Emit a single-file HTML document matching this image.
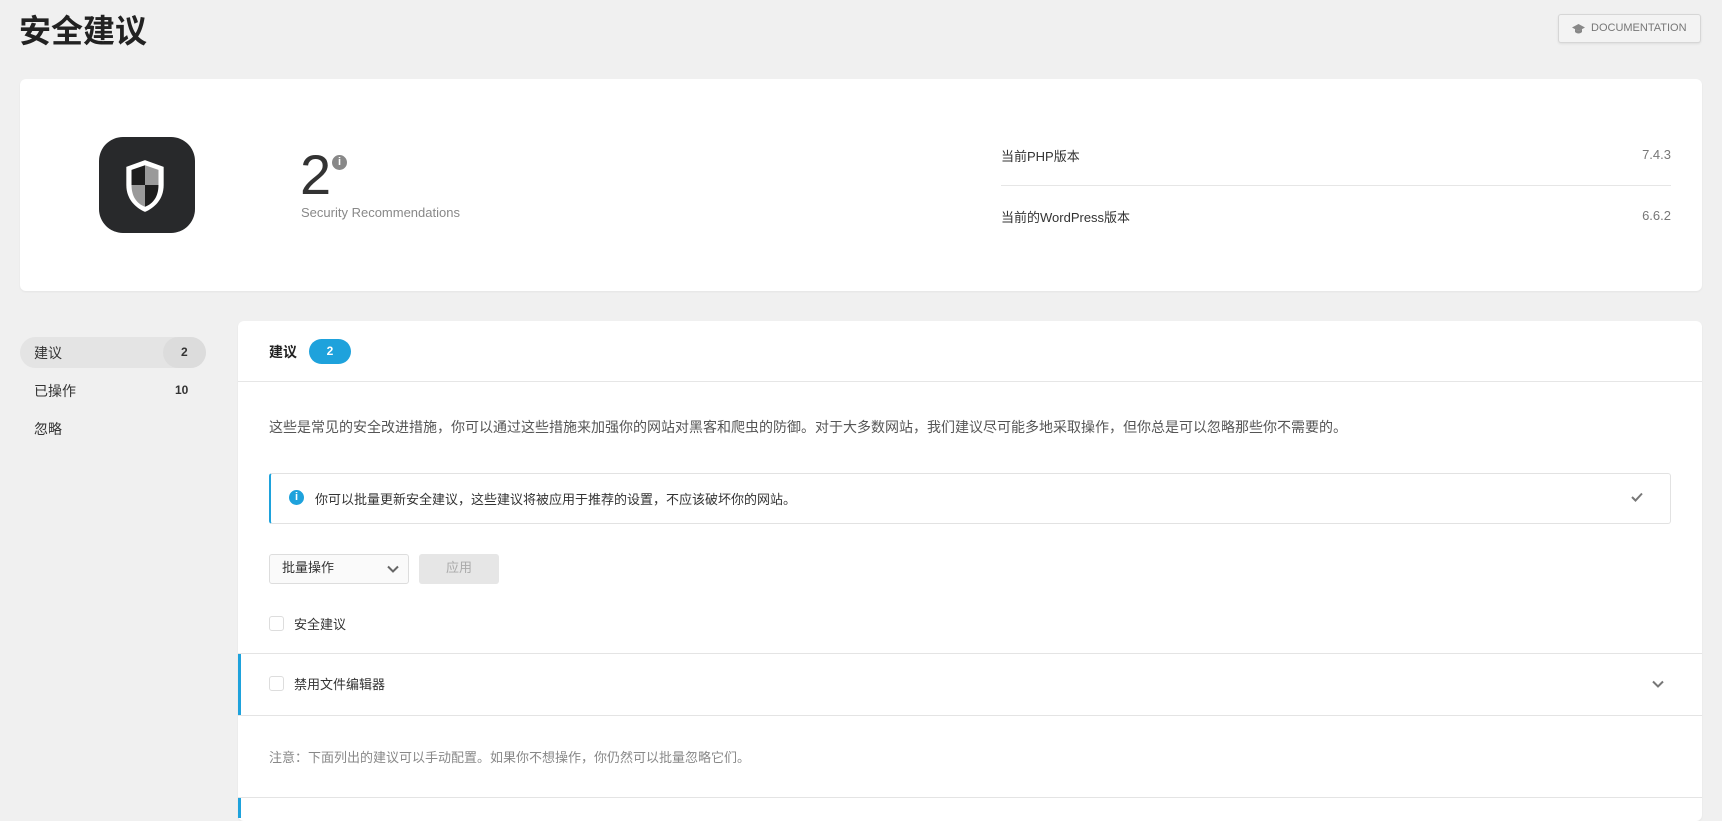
<!DOCTYPE html>
<html><head><meta charset="utf-8"><style>
*{box-sizing:border-box;margin:0;padding:0}
body{width:1722px;height:809px;overflow:hidden;background:#f0f0f0;font-family:"Liberation Sans","Noto Sans CJK SC",sans-serif;color:#333;position:relative}
.a{position:absolute}
.card{background:#fff;border-radius:6px;box-shadow:0 1px 2px rgba(0,0,0,.05)}
</style></head><body>
<div class="a" style="left:19px;top:11px;font-size:32px;font-weight:bold;color:#222;line-height:40px">安全建议</div>
<div class="a" style="left:1558px;top:14px;width:143px;height:29px;border:1px solid #d6d6d6;border-radius:3px;background:#f3f3f3;box-shadow:0 1px 2px rgba(0,0,0,.08);font-size:11px;color:#777;line-height:27px;padding-left:32px">DOCUMENTATION
<svg class="a" style="left:13px;top:9px" width="13" height="10" viewBox="0 0 13 10"><path d="M0 3.5L6.5 0 13 3.5 6.5 7z" fill="#888"/><path d="M3 5v3c2 2 5 2 7 0V5L6.5 7z" fill="#888"/></svg></div>

<div class="a card" style="left:20px;top:79px;width:1682px;height:212px"></div>
<div class="a" style="left:99px;top:137px;width:96px;height:96px;border-radius:24px;background:#28292b"></div>
<svg class="a" style="left:122px;top:158px" width="46" height="56" viewBox="0 0 42 54">
<path d="M21 2L3 8.5v17.5c0 14 9 22 18 26 9-4 18-12 18-26V8.5z" fill="#fff"/>
<path d="M21 7L8 11.5V26h13z" fill="#1e1e1e"/><path d="M21 7l13 4.5V26H21z" fill="#9a9a9a"/>
<path d="M8 26h13v21C13 44 8 37 8 26z" fill="#9a9a9a"/><path d="M21 26h13c0 11-5 18-13 21z" fill="#1e1e1e"/>
</svg>
<div class="a" style="left:300px;top:147px;font-size:56px;color:#333;line-height:56px;font-weight:300">2</div>
<div class="a" style="left:332px;top:155px;width:15px;height:15px;border-radius:50%;background:#888;color:#fff;font-size:11px;font-weight:bold;text-align:center;line-height:15px">i</div>
<div class="a" style="left:301px;top:205px;font-size:13px;color:#888">Security Recommendations</div>
<div class="a" style="left:1001px;top:146px;font-size:13px">当前PHP版本</div>
<div class="a" style="left:1620px;top:147px;width:51px;text-align:right;font-size:13px;color:#777">7.4.3</div>
<div class="a" style="left:1001px;top:185px;width:670px;height:1px;background:#e6e6e6"></div>
<div class="a" style="left:1001px;top:207px;font-size:13px">当前的WordPress版本</div>
<div class="a" style="left:1620px;top:208px;width:51px;text-align:right;font-size:13px;color:#777">6.6.2</div>

<div class="a" style="left:20px;top:337px;width:186px;height:31px;border-radius:16px;background:#e4e4e4"></div>
<div class="a" style="left:163px;top:337px;width:43px;height:31px;border-radius:16px;background:#dcdcdc"></div>
<div class="a" style="left:34px;top:343px;font-size:14px">建议</div>
<div class="a" style="left:181px;top:345px;font-size:12px;font-weight:bold">2</div>
<div class="a" style="left:34px;top:381px;font-size:14px">已操作</div>
<div class="a" style="left:175px;top:383px;font-size:12px;font-weight:bold">10</div>
<div class="a" style="left:34px;top:419px;font-size:14px">忽略</div>

<div class="a card" style="left:238px;top:321px;width:1464px;height:500px"></div>
<div class="a" style="left:269px;top:342px;font-size:14px;font-weight:bold;color:#222">建议</div>
<div class="a" style="left:309px;top:339px;width:42px;height:25px;border-radius:13px;background:#1ea2dc;color:#fff;font-size:12px;font-weight:bold;text-align:center;line-height:25px">2</div>
<div class="a" style="left:238px;top:381px;width:1464px;height:1px;background:#e6e6e6"></div>
<div class="a" style="left:269px;top:417px;font-size:14px;color:#555">这些是常见的安全改进措施，你可以通过这些措施来加强你的网站对黑客和爬虫的防御。对于大多数网站，我们建议尽可能多地采取操作，但你总是可以忽略那些你不需要的。</div>
<div class="a" style="left:269px;top:473px;width:1402px;height:51px;border:1px solid #e2e2e2;border-left:2px solid #1ea2dc;border-radius:3px"></div>
<div class="a" style="left:289px;top:490px;width:15px;height:15px;border-radius:50%;background:#1ea2dc;color:#fff;font-size:11px;font-weight:bold;text-align:center;line-height:15px">i</div>
<div class="a" style="left:315px;top:489px;font-size:13px;color:#333">你可以批量更新安全建议，这些建议将被应用于推荐的设置，不应该破坏你的网站。</div>
<svg class="a" style="left:1631px;top:492px" width="12" height="10" viewBox="0 0 12 10"><path d="M1 5l3.5 3.5L11 1.5" stroke="#777" stroke-width="2" fill="none"/></svg>
<div class="a" style="left:269px;top:554px;width:140px;height:30px;border:1px solid #ddd;border-radius:3px;background:#fafafa;font-size:13px;line-height:26px;padding-left:12px">批量操作</div>
<svg class="a" style="left:387px;top:565px" width="12" height="8" viewBox="0 0 12 8"><path d="M1 1.5l5 5 5-5" stroke="#666" stroke-width="2" fill="none"/></svg>
<div class="a" style="left:419px;top:554px;width:80px;height:30px;border-radius:3px;background:#e6e6e6;color:#aaa;font-size:13px;text-align:center;line-height:28px">应用</div>
<div class="a" style="left:269px;top:616px;width:15px;height:15px;border:1px solid #ddd;border-radius:3px"></div>
<div class="a" style="left:294px;top:614px;font-size:13px">安全建议</div>
<div class="a" style="left:238px;top:653px;width:1464px;height:1px;background:#e4e4e4"></div>
<div class="a" style="left:238px;top:654px;width:3px;height:61px;background:#1ea2dc"></div>
<div class="a" style="left:269px;top:676px;width:15px;height:15px;border:1px solid #ddd;border-radius:3px"></div>
<div class="a" style="left:294px;top:674px;font-size:13px">禁用文件编辑器</div>
<svg class="a" style="left:1652px;top:680px" width="12" height="8" viewBox="0 0 12 8"><path d="M1 1.5l5 5 5-5" stroke="#777" stroke-width="2" fill="none"/></svg>
<div class="a" style="left:238px;top:715px;width:1464px;height:1px;background:#e4e4e4"></div>
<div class="a" style="left:269px;top:747px;font-size:13px;color:#888">注意：下面列出的建议可以手动配置。如果你不想操作，你仍然可以批量忽略它们。</div>
<div class="a" style="left:238px;top:797px;width:1464px;height:1px;background:#e4e4e4"></div>
<div class="a" style="left:238px;top:798px;width:3px;height:20px;background:#1ea2dc"></div>
</body></html>
